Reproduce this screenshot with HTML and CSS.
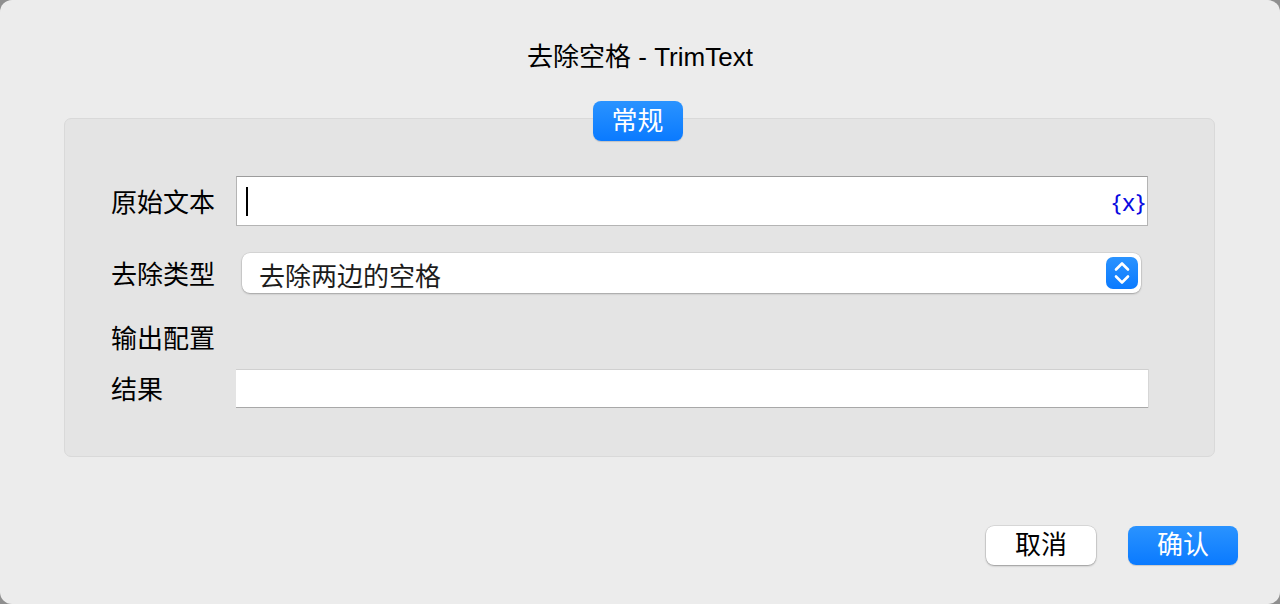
FILE: index.html
```html
<!DOCTYPE html>
<html lang="zh">
<head>
<meta charset="utf-8">
<link rel="stylesheet" href="styles.css">
</head>
<body>
<div class="window">
  <div class="title">去除空格 - TrimText</div>
  <div class="group">
    <div class="legend">常规</div>
    <div class="row row-text">
      <div class="label">原始文本</div>
      <div class="input input-main">
        <span class="caret"></span>
        <span class="var">{x}</span>
      </div>
    </div>
    <div class="row row-select">
      <div class="label">去除类型</div>
      <div class="select">
        <span class="select-text">去除两边的空格</span>
        <span class="stepper">
          <svg width="32" height="32" viewBox="0 0 32 32">
            <path d="M10 12.5 L16 6.5 L22 12.5" fill="none" stroke="#fff" stroke-width="2.6" stroke-linecap="round" stroke-linejoin="round"/>
            <path d="M10 19.5 L16 25.5 L22 19.5" fill="none" stroke="#fff" stroke-width="2.6" stroke-linecap="round" stroke-linejoin="round"/>
          </svg>
        </span>
      </div>
    </div>
    <div class="row row-section">
      <div class="label">输出配置</div>
    </div>
    <div class="row row-result">
      <div class="label">结果</div>
      <div class="input input-result"></div>
    </div>
  </div>
  <div class="buttons">
    <button class="btn btn-cancel">取消</button>
    <button class="btn btn-ok">确认</button>
  </div>
</div>
</body>
</html>
```

FILE: styles.css
```css
html, body {
  margin: 0;
  padding: 0;
  background: #8f8f8f;
}
body {
  width: 1280px;
  height: 604px;
  overflow: hidden;
  font-family: "Liberation Sans", "Noto Sans CJK SC", sans-serif;
  color: #000;
}
.window {
  width: 1280px;
  height: 604px;
  box-sizing: border-box;
  background: #ececec;
  border-radius: 12px;
  padding-top: 40px;
}
.title {
  height: 34px;
  line-height: 34px;
  text-align: center;
  font-size: 26px;
  margin-bottom: 44px;
}
.group {
  position: relative;
  margin: 0 65px 0 64px;
  background: #e4e4e4;
  border: 1px solid #d9d9d9;
  border-radius: 7px;
  padding: 57px 66px 48px 46px;
}
.legend {
  position: absolute;
  left: 50%;
  top: -18px;
  transform: translateX(-50%);
  margin-left: -2px;
  width: 90px;
  height: 40px;
  box-sizing: border-box;
  line-height: 40px;
  text-align: center;
  color: #fff;
  font-size: 26px;
  border-radius: 8px;
  background: linear-gradient(#2a93ff, #0a7aff);
  box-shadow: 0 1px 1px rgba(0,0,0,0.15);
}
.row {
  display: flex;
  align-items: center;
}
.label {
  width: 125px;
  flex: none;
  font-size: 26px;
  line-height: 30px;
  padding-top: 3px;
}
.row-text { height: 50px; }
.row-select { height: 40px; margin-top: 27px; }
.row-section { height: 30px; margin-top: 29px; }
.row-result { height: 39px; margin-top: 17px; }
.input {
  flex: 1;
  background: #fff;
  box-sizing: border-box;
}
.input-main {
  height: 50px;
  border: 1px solid #b4b4b4;
  border-top-color: #9c9c9c;
  display: flex;
  align-items: center;
  justify-content: space-between;
  padding: 0 1px 0 9px;
}
.caret {
  width: 2px;
  height: 29px;
  background: #000;
}
.var {
  color: #0a0adf;
  font-size: 24px;
  letter-spacing: 1px;
  font-family: "Noto Sans", sans-serif;
}
.select {
  flex: 1;
  height: 40px;
  margin: 0 7px 0 6px;
  background: #fff;
  border-radius: 8px;
  box-shadow: 0 0 0 0.5px rgba(0,0,0,0.12), 0 1px 2px rgba(0,0,0,0.25);
  display: flex;
  align-items: center;
  justify-content: space-between;
  padding: 0 3px 0 17px;
}
.select-text {
  font-size: 26px;
  color: #1c1c1c;
  padding-top: 2px;
}
.stepper {
  width: 32px;
  height: 32px;
  border-radius: 7px;
  background: linear-gradient(#2a93ff, #0a7aff);
  display: flex;
}
.input-result {
  height: 39px;
  border-top: 1px solid #d0d0d0;
  border-bottom: 1px solid #a8a8a8;
  box-shadow: 1px 0 0 #d6d6d6;
}
.buttons {
  display: flex;
  justify-content: flex-end;
  gap: 32px;
  margin-top: 69px;
  padding-right: 42px;
}
.btn {
  width: 110px;
  height: 39px;
  border: none;
  border-radius: 8px;
  font-family: "Liberation Sans", "Noto Sans CJK SC", sans-serif;
  font-size: 26px;
  padding: 0;
  line-height: 39px;
}
.btn-cancel {
  background: #fff;
  color: #000;
  box-shadow: 0 0 0 0.5px rgba(0,0,0,0.15), 0 1px 2px rgba(0,0,0,0.3);
}
.btn-ok {
  background: linear-gradient(#2a93ff, #0a7aff);
  color: #fff;
  box-shadow: 0 1px 1px rgba(0,0,0,0.15);
}
```
